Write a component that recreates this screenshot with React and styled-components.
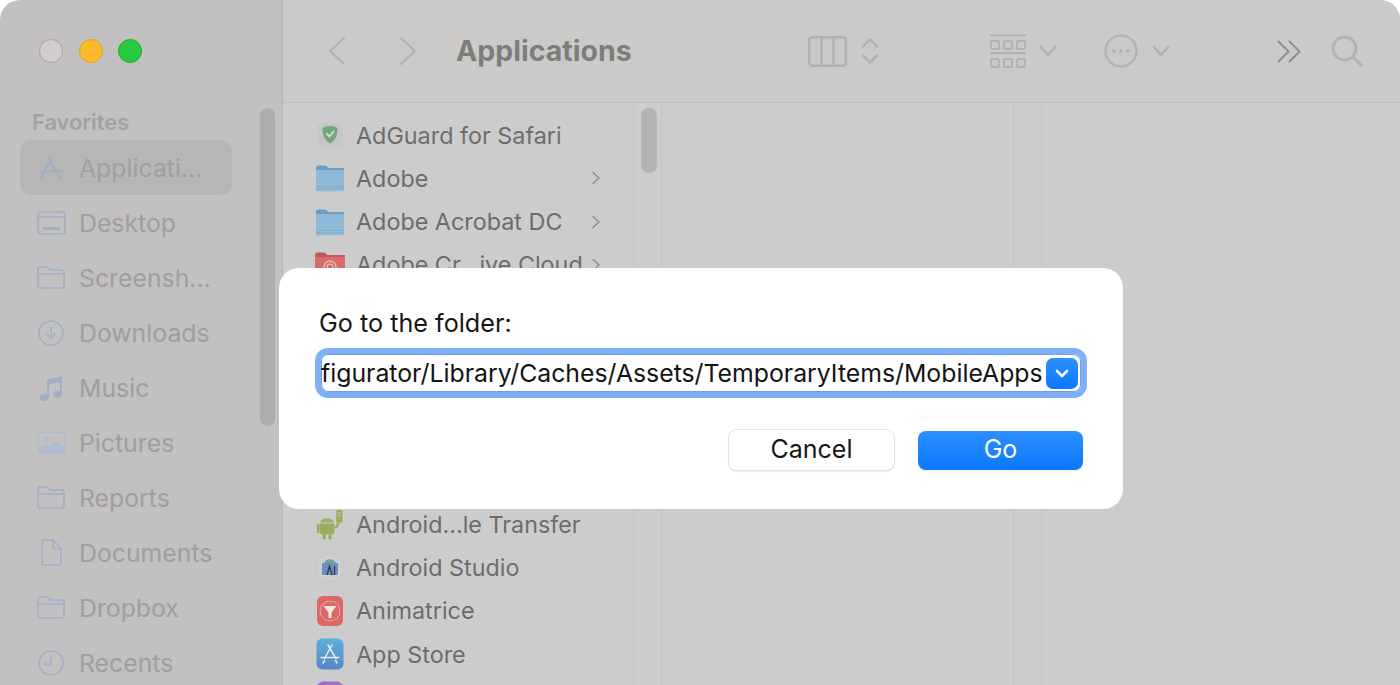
import React from "react";
import styled, { createGlobalStyle } from "styled-components";

const GlobalStyle = createGlobalStyle`
  html, body {
    margin: 0;
    height: 100%;
    overflow: hidden;
    background: #ffffff;
    font-family: Inter, "Liberation Sans", sans-serif;
  }
`;

const Stroke = ({ w, h, vb, sw = 2.4, color = "currentColor", children }) => (
  <svg width={w} height={h} viewBox={vb} fill="none" stroke={color} strokeWidth={sw} strokeLinecap="round" strokeLinejoin="round">
    {children}
  </svg>
);

const FolderOutline = () => (
  <Stroke w={28} h={23} vb="0 0 28 23" sw={1.6}>
    <path d="M1 20V3.5C1 2 2 1 3.5 1h6.5l3 3h11.5C26 4 27 5 27 6.5v13.5c0 1.2-1 2-2.3 2H3.3C2 22 1 21.200 1 20z" />
    <path d="M1 8h26" />
  </Stroke>
);

const sidebarItems = [
  {
    label: "Applicati...",
    active: true,
    icon: (
      <Stroke w={26} h={23} vb="0 0 26 23" sw={2}>
        <path d="M15 1L4 20M10 1l11 19M1 15.500h24M3 22l1-2M23 22l-1-2" />
      </Stroke>
    ),
  },
  {
    label: "Desktop",
    icon: (
      <Stroke w={29} h={24} vb="0 0 29 24" sw={1.6}>
        <rect x="1" y="1" width="27" height="22" rx="3" />
        <path d="M1 6h27" />
        <path d="M6 17.500h17" strokeWidth="3" strokeLinecap="butt" />
      </Stroke>
    ),
  },
  { label: "Screensh...", icon: <FolderOutline /> },
  {
    label: "Downloads",
    icon: (
      <Stroke w={26} h={26} vb="0 0 26 26" sw={1.6}>
        <circle cx="13" cy="13" r="12" />
        <path d="M13 7v11M8.500 13.500L13 18l4.500-4.500" />
      </Stroke>
    ),
  },
  {
    label: "Music",
    icon: (
      <svg width="24" height="27" viewBox="0 0 24 27" fill="currentColor">
        <path d="M8 5.500L23 2.500V20h-2.200V8L10 10.200V24H8z" />
        <ellipse cx="5" cy="23.500" rx="4.500" ry="3.400" />
        <ellipse cx="18.500" cy="20.200" rx="4.500" ry="3.400" />
      </svg>
    ),
  },
  {
    label: "Pictures",
    icon: (
      <svg width="29" height="23" viewBox="0 0 29 23">
        <rect x="0.500" y="0.500" width="28" height="22" rx="2.500" fill="#aebbd0" />
        <rect x="2" y="2" width="25" height="19" fill="#c2c0c0" />
        <circle cx="10" cy="7.500" r="2.200" fill="#aebbd0" />
        <path d="M2 21v-3l6-5 5 3.500 7-7 7 7V21z" fill="#aebbd0" />
      </svg>
    ),
  },
  { label: "Reports", icon: <FolderOutline /> },
  {
    label: "Documents",
    icon: (
      <Stroke w={21} h={27} vb="0 0 21 27" sw={1.6}>
        <path d="M2.500 1H12l8 8.500V24c0 1.200-.8 2-2 2H3c-1.200 0-2-.8-2-2V2.500C1 1.500 1.500 1 2.500 1z" />
        <path d="M12 1v8.500h8" />
      </Stroke>
    ),
  },
  { label: "Dropbox", icon: <FolderOutline /> },
  {
    label: "Recents",
    icon: (
      <Stroke w={26} h={26} vb="0 0 26 26" sw={1.6}>
        <circle cx="13" cy="13" r="12" />
        <path d="M13 5.500V14H6.500" />
      </Stroke>
    ),
  },
];

const BlueFolder = () => (
  <svg width="30" height="28" viewBox="0 0 30 28">
    <path d="M1 4c0-1.500 1-2.500 2.500-2.500h6c1 0 1.500.4 2.200 1L13.500 4H29v3H1z" fill="#6d9dc2" />
    <path d="M1 6h28v19.500c0 1-.8 1.800-1.800 1.800H2.800c-1 0-1.800-.8-1.800-1.800z" fill="#8fb9d7" />
    <path d="M1 22.500h28M1 24.800h28" stroke="#7fa9c7" strokeWidth="0.8" />
  </svg>
);

const AdguardIcon = () => (
  <svg width="28" height="26" viewBox="0 0 28 26">
    <rect x="1" y="0.500" width="26" height="25" rx="5" fill="#c6c8c6" />
    <path d="M14 4c-3 0-5.500.8-7.500 2 0 7 1.700 12 7.500 15.500 5.800-3.500 7.500-8.500 7.500-15.500-2-1.200-4.500-2-7.500-2z" fill="#73a67b" />
    <path d="M10.500 11.500l3 3 4.500-5.500" fill="none" stroke="#d5e2d6" strokeWidth="1.800" />
  </svg>
);

const CreativeCloudIcon = () => (
  <svg width="30" height="28" viewBox="0 0 30 28">
    <path d="M0 4c0-1.500 1-2.500 2.500-2.500h7l3 2.500H30v3H0z" fill="#bd5a58" />
    <path d="M0 6h30v20H0z" fill="#d86a68" />
    <circle cx="15" cy="16" r="6" fill="none" stroke="#e9b5b3" strokeWidth="1.500" />
    <circle cx="15" cy="16" r="2.800" fill="none" stroke="#e9b5b3" strokeWidth="1.300" />
  </svg>
);

const AndroidIcon = () => (
  <svg width="26" height="31" viewBox="0 0 27 32">
    <path d="M3 14a8 7 0 0 1 15 0z" fill="#99ad5c" />
    <rect x="3" y="15" width="15" height="11" rx="1.500" fill="#99ad5c" />
    <rect x="0" y="15" width="2.500" height="10" rx="1.200" fill="#99ad5c" />
    <rect x="6" y="25" width="3" height="6.500" rx="1.400" fill="#99ad5c" />
    <rect x="12" y="25" width="3" height="6.500" rx="1.400" fill="#99ad5c" />
    <path d="M18 19c3 0 3.500-1.500 4-5" fill="none" stroke="#99ad5c" strokeWidth="2.500" />
    <rect x="20" y="1" width="6.500" height="13" rx="1" fill="#99ad5c" />
    <path d="M21.500 4h3.500M21.500 7h3.500" stroke="#cbcbcb" strokeWidth="1" />
  </svg>
);

const StudioIcon = () => (
  <svg width="30" height="30" viewBox="0 0 30 30">
    <circle cx="15" cy="15" r="14" fill="#cfcfcf" stroke="#c5c5c5" />
    <path d="M9 10a6.500 6 0 0 1 12 0z" fill="#6fa58c" />
    <rect x="7" y="10" width="16" height="12" rx="1" fill="#6d90c4" />
    <path d="M12 22l2.500-9 2.500 9M19.500 13v9" fill="none" stroke="#2f3b4c" strokeWidth="1.300" />
  </svg>
);

const AnimatriceIcon = () => (
  <svg width="28" height="32" viewBox="0 0 28 32">
    <rect x="1" y="1" width="26" height="30" rx="6" fill="#db6767" />
    <circle cx="14" cy="16" r="10" fill="none" stroke="#eaa5a5" strokeWidth="1" />
    <path d="M7.500 11h13l-5 6.500V23h-3v-5.500z" fill="#f2e6e4" />
  </svg>
);

const AppStoreIcon = () => (
  <svg width="28" height="32" viewBox="0 0 28 32">
    <defs>
      <linearGradient id="store" x1="0" y1="0" x2="0" y2="1">
        <stop offset="0" stopColor="#5fb0d8" />
        <stop offset="1" stopColor="#5685c8" />
      </linearGradient>
    </defs>
    <rect x="0.500" y="0.500" width="27" height="31" rx="6" fill="url(#store)" />
    <path d="M16 7L8.500 20.500M12 7l8 13.500M5 19.500h18M7 25l1.500-2.500M21 25l-1.500-2.500" fill="none" stroke="#e6edf2" strokeWidth="1.500" strokeLinecap="round" />
  </svg>
);

const PurpleIcon = () => (
  <svg width="28" height="32" viewBox="0 0 28 32">
    <rect x="0.500" y="0.500" width="27" height="31" rx="7" fill="#9f6fc9" />
  </svg>
);

const Page = styled.div`
  width: 1400px;
  height: 685px;
  overflow: hidden;
  position: relative;
  background: #ffffff;
`;

const FinderWindow = styled.div`
  display: grid;
  grid-template-columns: 283px 1fr;
  height: 685px;
  border-radius: 20px 20px 0 0;
  overflow: hidden;
`;

const Sidebar = styled.aside`
  position: relative;
  background: #c2c0c0;
  border-right: 1px solid #b9b8b8;
  padding-top: 39px;
  height: 646px;
`;

const Lights = styled.div`
  display: flex;
  gap: 15.5px;
  padding-left: 39px;
`;

const Light = styled.span`
  width: 24px;
  height: 24px;
  box-sizing: border-box;
  border-radius: 50%;
  background: ${(p) => p.$fill};
  border: 1px solid ${(p) => p.$edge};
`;

const SectionLabel = styled.div`
  margin: 45px 0 4px 32px;
  font-size: 21.8px;
  line-height: 28px;
  font-weight: 600;
  color: #a3a1a1;
`;

const SideRow = styled.div`
  display: flex;
  align-items: center;
  gap: 13px;
  width: 212px;
  height: 55px;
  box-sizing: border-box;
  margin-left: 20px;
  padding-left: 16px;
  border-radius: 11px;
  background: ${(p) => (p.$active ? "#b8b5b5" : "transparent")};
  color: #a0aec6;
`;

const SideIcon = styled.span`
  display: flex;
  justify-content: center;
  align-items: center;
  width: 30px;
`;

const SideText = styled.span`
  font-size: 24.8px;
  color: #a09e9e;
  white-space: nowrap;
`;

const SideThumb = styled.div`
  position: absolute;
  left: 260px;
  top: 108px;
  width: 15px;
  height: 318px;
  border-radius: 8px;
  background: #aeacac;
`;

const Main = styled.main`
  display: flex;
  flex-direction: column;
  min-width: 0;
  background: #cccccc;
`;

const Toolbar = styled.header`
  display: flex;
  align-items: center;
  height: 102px;
  flex: none;
  background: #cbcac8;
  border-bottom: 1px solid #bdbdbc;
  color: #b3b2b0;
`;

const ToolIcon = styled.span`
  display: flex;
  flex: none;
  margin-left: ${(p) => p.$left}px;
  color: ${(p) => p.$color || "inherit"};
`;

const WindowTitle = styled.h1`
  margin: 0 0 0 39px;
  width: 176px;
  flex: none;
  font-size: 28.5px;
  font-weight: 700;
  line-height: 34px;
  color: #7d7d7c;
  white-space: nowrap;
`;

const Columns = styled.div`
  display: flex;
  flex: 1;
  min-height: 0;
`;

const Pane = styled.section`
  width: ${(p) => p.$width}px;
  flex: none;
  overflow: hidden;
`;

const Gutter = styled.div`
  width: 27px;
  flex: none;
  border-left: 1px solid #c2c2c2;
  border-right: 1px solid #c2c2c2;
`;

const GutterThumb = styled.div`
  width: 16px;
  height: 65px;
  margin: 5px 0 0 7px;
  border-radius: 8px;
  background: #b4b4b4;
`;

const FileList = styled.ul`
  list-style: none;
  margin: 0;
  padding: 10.6px 0 0;
`;

const FileRow = styled.li`
  display: flex;
  align-items: center;
  height: 43.25px;
  padding-left: 32px;
  gap: 11px;
`;

const FileIcon = styled.span`
  display: flex;
  justify-content: center;
  width: 30px;
  flex: none;
`;

const FileName = styled.span`
  font-size: 23.35px;
  color: #6c6c6c;
  white-space: nowrap;
  width: 234px;
`;

const Disclosure = styled.span`
  display: flex;
  margin-left: -10px;
  color: #8e8e8e;
`;

const Dialog = styled.div`
  position: absolute;
  left: 279px;
  top: 268px;
  width: 844px;
  height: 241px;
  box-sizing: border-box;
  padding: 40px 37px 0 36px;
  background: #ffffff;
  border-radius: 20px;
`;

const DialogLabel = styled.div`
  padding-left: 4px;
  font-size: 25.2px;
  line-height: 30px;
  color: #161616;
`;

const PathField = styled.div`
  display: flex;
  align-items: center;
  justify-content: space-between;
  box-sizing: border-box;
  width: 772px;
  height: 50px;
  margin-top: 10px;
  padding-right: 3px;
  border: 6.5px solid #80aff6;
  border-radius: 13px;
  background: #ffffff;
  box-shadow: inset 0 0 0 1px #6a9ff0;
  overflow: hidden;
`;

const PathText = styled.span`
  font-size: 24.8px;
  color: #141414;
  white-space: nowrap;
`;

const Stepper = styled.span`
  display: flex;
  align-items: center;
  justify-content: center;
  flex: none;
  width: 32px;
  height: 31px;
  border-radius: 7px;
  background: linear-gradient(#2f8ffb, #0a78fe);
`;

const DialogButtons = styled.div`
  display: flex;
  align-items: flex-end;
  justify-content: flex-end;
  gap: 24px;
  height: 40px;
  margin: 32px 3px 0 0;
`;

const Button = styled.button`
  width: 165px;
  height: ${(p) => (p.$primary ? 39 : 40)}px;
  border: 0;
  padding: 0 0 ${(p) => (p.$primary ? 3 : 2)}px;
  border-radius: 8px;
  font-family: inherit;
  font-size: 25px;
  color: ${(p) => (p.$primary ? "#ffffff" : "#161616")};
  background: ${(p) => (p.$primary ? "linear-gradient(#2d8ffc, #0a78ff)" : "#ffffff")};
  box-shadow: ${(p) => (p.$primary ? "0 1px 2px rgba(0,0,0,.08)" : "0 0 0 1px #e3e3e3, 0 1px 2px rgba(0,0,0,.25)")};
`;

const fileRows = [
  { name: "AdGuard for Safari", icon: <AdguardIcon /> },
  { name: "Adobe", icon: <BlueFolder />, folder: true },
  { name: "Adobe Acrobat DC", icon: <BlueFolder />, folder: true },
  { name: "Adobe Cr...ive Cloud", icon: <CreativeCloudIcon />, folder: true },
  {},
  {},
  {},
  {},
  {},
  { name: "Android...le Transfer", icon: <AndroidIcon /> },
  { name: "Android Studio", icon: <StudioIcon /> },
  { name: "Animatrice", icon: <AnimatriceIcon /> },
  { name: "App Store", icon: <AppStoreIcon /> },
  { icon: <PurpleIcon /> },
];

export default function App() {
  return (
    <Page>
      <GlobalStyle />
      <FinderWindow>
        <Sidebar>
          <Lights>
            <Light $fill="#d3cdcd" $edge="#a9a4a4" />
            <Light $fill="#fdb92e" $edge="#e0a020" />
            <Light $fill="#29c940" $edge="#1fac2e" />
          </Lights>
          <SectionLabel>Favorites</SectionLabel>
          {sidebarItems.map((item) => (
            <SideRow key={item.label} $active={item.active}>
              <SideIcon>{item.icon}</SideIcon>
              <SideText>{item.label}</SideText>
            </SideRow>
          ))}
          <SideThumb />
        </Sidebar>
        <Main>
          <Toolbar>
            <ToolIcon $left={45}>
              <Stroke w={18} h={30} vb="0 0 18 30" sw={2.2}><path d="M16 2L2 15l14 13" /></Stroke>
            </ToolIcon>
            <ToolIcon $left={53}>
              <Stroke w={18} h={30} vb="0 0 18 30" sw={2.2}><path d="M2 2l14 13L2 28" /></Stroke>
            </ToolIcon>
            <WindowTitle>Applications</WindowTitle>
            <ToolIcon $left={176}>
              <Stroke w={39} h={31} vb="0 0 39 31" sw={2.4}>
                <rect x="1.200" y="1.200" width="36.600" height="28.600" rx="3" />
                <path d="M13.500 1.200v28.600M25.500 1.200v28.600" />
              </Stroke>
            </ToolIcon>
            <ToolIcon $left={14}>
              <Stroke w={18} h={28} vb="0 0 18 28" sw={2.600}>
                <path d="M2 9.500l7-7 7 7M2 18.500l7 7 7-7" />
              </Stroke>
            </ToolIcon>
            <ToolIcon $left={111}>
              <svg width="36" height="35" viewBox="0 0 36 35" fill="none" stroke="currentColor" strokeWidth="2">
                <path d="M0 1.200h36M0 19h36" />
                <rect x="1" y="7" width="8" height="8" rx="1.500" />
                <rect x="14" y="7" width="8" height="8" rx="1.500" />
                <rect x="27" y="7" width="8" height="8" rx="1.500" />
                <rect x="1" y="25" width="8" height="8" rx="1.500" />
                <rect x="14" y="25" width="8" height="8" rx="1.500" />
                <rect x="27" y="25" width="8" height="8" rx="1.500" />
              </svg>
            </ToolIcon>
            <ToolIcon $left={13}>
              <Stroke w={18} h={12} vb="0 0 18 12" sw={2.600}><path d="M2 2l7 8 7-8" /></Stroke>
            </ToolIcon>
            <ToolIcon $left={47}>
              <svg width="34" height="34" viewBox="0 0 34 34" fill="none" stroke="currentColor" strokeWidth="2.200">
                <circle cx="17" cy="17" r="15.500" />
                <circle cx="10" cy="17" r="1.800" fill="currentColor" stroke="none" />
                <circle cx="17" cy="17" r="1.800" fill="currentColor" stroke="none" />
                <circle cx="24" cy="17" r="1.800" fill="currentColor" stroke="none" />
              </svg>
            </ToolIcon>
            <ToolIcon $left={14}>
              <Stroke w={18} h={12} vb="0 0 18 12" sw={2.600}><path d="M2 2l7 8 7-8" /></Stroke>
            </ToolIcon>
            <ToolIcon $left={107} $color="#8d8d8c">
              <Stroke w={25} h={23} vb="0 0 25 23" sw={1.800}><path d="M1.500 1.500l10 10-10 10M12.500 1.500l10 10-10 10" /></Stroke>
            </ToolIcon>
            <ToolIcon $left={29}>
              <Stroke w={33} h={33} vb="0 0 33 33" sw={2.800}>
                <circle cx="13.500" cy="13.500" r="11.500" />
                <path d="M22 22l9 9" />
              </Stroke>
            </ToolIcon>
          </Toolbar>
          <Columns>
            <Pane $width={350}>
              <FileList>
                {fileRows.map((row, i) => (
                  <FileRow key={i}>
                    <FileIcon>{row.icon}</FileIcon>
                    {row.name && <FileName>{row.name}</FileName>}
                    {row.folder && (
                      <Disclosure>
                        <Stroke w={10} h={14} vb="0 0 10 14" sw={1.500}><path d="M2 1.500L8 7l-6 5.500" /></Stroke>
                      </Disclosure>
                    )}
                  </FileRow>
                ))}
              </FileList>
            </Pane>
            <Gutter><GutterThumb /></Gutter>
            <Pane $width={351} />
            <Gutter />
          </Columns>
        </Main>
      </FinderWindow>
      <Dialog>
        <DialogLabel>Go to the folder:</DialogLabel>
        <PathField>
          <PathText>figurator/Library/Caches/Assets/TemporaryItems/MobileApps</PathText>
          <Stepper>
            <Stroke w={16} h={11} vb="0 0 16 11" sw={2.600} color="#ffffff"><path d="M3 3l5 5 5-5" /></Stroke>
          </Stepper>
        </PathField>
        <DialogButtons>
          <Button>Cancel</Button>
          <Button $primary>Go</Button>
        </DialogButtons>
      </Dialog>
    </Page>
  );
}
